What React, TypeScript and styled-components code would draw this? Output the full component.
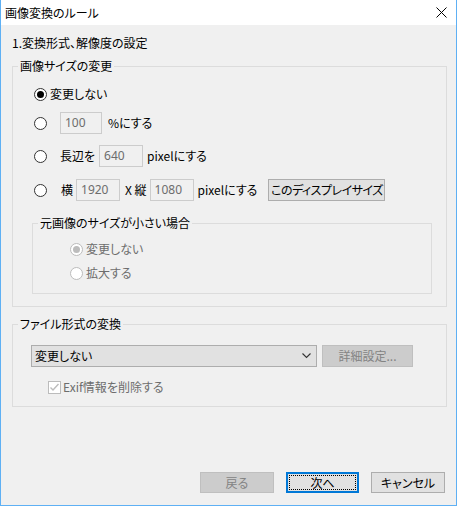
import React from "react";
import styled, { createGlobalStyle, css } from "styled-components";

const GlobalStyle = createGlobalStyle`
  html, body { margin: 0; padding: 0; background: #ffffff; }
  body {
    font-family: "Noto Sans CJK JP", "Noto Sans", sans-serif;
    font-size: 12px;
    line-height: 16px;
    color: #000;
    font-feature-settings: "palt";
  }
  * { box-sizing: border-box; }
`;

const Window = styled.div`
  width: 457px;
  height: 506px;
  border: 1px solid #5eb0f4;
  border-top: none;
  background: #f0f0f0;
  display: flex;
  flex-direction: column;
`;

const TitleBar = styled.div`
  height: 25px;
  flex: none;
  background: #ffffff;
  display: flex;
  align-items: center;
  justify-content: space-between;
  padding: 0 9px 0 4px;
`;

const TitleText = styled.span`
  font-size: 12px;
  line-height: 16px;
`;

const Body = styled.div`
  flex: 1;
  display: flex;
  flex-direction: column;
  padding: 0 9px 12px 11px;
`;

const Heading = styled.div`
  margin-top: 10px;
  line-height: 16px;
`;

const Group = styled.fieldset<{ $mt: number; $mx?: [number, number]; $pb: number }>`
  margin: ${(p) => p.$mt}px ${(p) => (p.$mx ? p.$mx[1] : 0)}px 0 ${(p) => (p.$mx ? p.$mx[0] : 0)}px;
  padding: 0 0 ${(p) => p.$pb}px 0;
  border: 1px solid #dcdcdc;
  min-inline-size: auto;
  display: flex;
  flex-direction: column;
`;

const Legend = styled.legend`
  margin-left: 5px;
  padding: 0 2px;
  line-height: 16px;
  font-size: 12px;
  color: #000;
`;

const Row = styled.div<{ $mt: number; $pl: number; $h?: number }>`
  display: flex;
  align-items: center;
  height: ${(p) => p.$h ?? 22}px;
  margin-top: ${(p) => p.$mt}px;
  padding-left: ${(p) => p.$pl}px;
  white-space: nowrap;
`;

const RadioCircle = styled.span<{ $checked?: boolean; $disabled?: boolean }>`
  flex: none;
  width: 13px;
  height: 13px;
  border-radius: 50%;
  border: 1px solid ${(p) => (p.$disabled ? "#bcbcbc" : "#333333")};
  background: #ffffff;
  display: inline-flex;
  align-items: center;
  justify-content: center;
  ${(p) =>
    p.$checked &&
    css`
      &::after {
        content: "";
        width: 7px;
        height: 7px;
        border-radius: 50%;
        background: ${p.$disabled ? "#bcbcbc" : "#000000"};
      }
    `}
`;

const RadioSlot = styled.span`
  flex: none;
  width: 26px;
  display: inline-flex;
`;

const Label = styled.span<{ $ml?: number; $disabled?: boolean }>`
  margin-left: ${(p) => p.$ml ?? 0}px;
  color: ${(p) => (p.$disabled ? "#6d6d6d" : "#000")};
  line-height: 16px;
`;

const NumBox = styled.span<{ $w: number; $ml?: number }>`
  flex: none;
  width: ${(p) => p.$w}px;
  height: 22px;
  margin-left: ${(p) => p.$ml ?? 0}px;
  border: 1px solid #cccccc;
  background: #f0f0f0;
  color: #6d6d6d;
  padding-left: 4px;
  display: inline-flex;
  align-items: center;
  font-family: "Noto Sans", "Noto Sans CJK JP", sans-serif;
  font-size: 12px;
`;

const Button = styled.span<{ $w: number; $h?: number; $ml?: number; $disabled?: boolean; $default?: boolean; $tight?: boolean }>`
  flex: none;
  width: ${(p) => p.$w}px;
  height: ${(p) => p.$h ?? 21}px;
  margin-left: ${(p) => p.$ml ?? 0}px;
  display: inline-flex;
  align-items: center;
  justify-content: center;
  background: ${(p) => (p.$disabled ? "#cccccc" : "#e1e1e1")};
  border: ${(p) => (p.$default ? "2px solid #0078d7" : p.$disabled ? "1px solid #bfbfbf" : "1px solid #adadad")};
  color: ${(p) => (p.$disabled ? "#838383" : "#000")};
  font-size: 12px;
  line-height: 16px;
  letter-spacing: ${(p) => (p.$tight ? "-0.5px" : "0")};
  position: relative;
`;

const FocusRing = styled.span`
  position: absolute;
  inset: 1px;
  border: 1px dotted #000;
`;

const Select = styled.div`
  flex: none;
  width: 286px;
  height: 22px;
  border: 1px solid #adadad;
  background: #e1e1e1;
  display: flex;
  align-items: center;
  justify-content: space-between;
  padding: 0 5px 0 3px;
`;

const CheckBox = styled.span`
  flex: none;
  width: 13px;
  height: 13px;
  border: 1px solid #bcbcbc;
  background: #ffffff;
  display: inline-flex;
  align-items: center;
  justify-content: center;
`;

const Footer = styled.div`
  margin-top: auto;
  display: flex;
  justify-content: flex-end;
  gap: 12px;
  padding-right: 2px;
`;

const CloseIcon = () => (
  <svg width="11" height="11" viewBox="0 0 11 11">
    <path d="M0.5 0.5 L10.5 10.5 M10.5 0.5 L0.5 10.5" stroke="#000" strokeWidth="1" fill="none" />
  </svg>
);

const Chevron = () => (
  <svg width="9" height="6" viewBox="0 0 9 6">
    <path d="M0.5 0.5 L4.5 4.5 L8.5 0.5" stroke="#333" strokeWidth="1.1" fill="none" />
  </svg>
);

const Check = () => (
  <svg width="11" height="11" viewBox="0 0 11 11">
    <path d="M1.5 5.5 L4 8 L9.5 2" stroke="#bcbcbc" strokeWidth="1.4" fill="none" />
  </svg>
);

export default function App() {
  return (
    <>
      <GlobalStyle />
      <Window>
        <TitleBar>
          <TitleText>画像変換のルール</TitleText>
          <CloseIcon />
        </TitleBar>
        <Body>
          <Heading>1.変換形式、解像度の設定</Heading>
          <Group $mt={7} $pb={12}>
            <Legend>画像サイズの変更</Legend>
            <Row $mt={9} $pl={21}>
              <RadioCircle $checked />
              <Label $ml={3}>変更しない</Label>
            </Row>
            <Row $mt={7} $pl={21}>
              <RadioSlot>
                <RadioCircle />
              </RadioSlot>
              <NumBox $w={42}>100</NumBox>
              <Label $ml={6}>%にする</Label>
            </Row>
            <Row $mt={11} $pl={21}>
              <RadioSlot>
                <RadioCircle />
              </RadioSlot>
              <Label>長辺を</Label>
              <NumBox $w={44} $ml={4}>640</NumBox>
              <Label $ml={4}>pixelにする</Label>
            </Row>
            <Row $mt={12} $pl={21}>
              <RadioSlot>
                <RadioCircle />
              </RadioSlot>
              <Label $ml={1}>横</Label>
              <NumBox $w={44} $ml={3}>1920</NumBox>
              <Label $ml={5}>X 縦</Label>
              <NumBox $w={44} $ml={3}>1080</NumBox>
              <Label $ml={4}>pixelにする</Label>
              <Button $w={117} $h={22} $ml={11} $tight>このディスプレイサイズ</Button>
            </Row>
            <Group $mt={14} $mx={[19, 14]} $pb={12}>
              <Legend>元画像のサイズが小さい場合</Legend>
              <Row $mt={10} $pl={37} $h={16}>
                <RadioCircle $checked $disabled />
                <Label $ml={3} $disabled>変更しない</Label>
              </Row>
              <Row $mt={8} $pl={37} $h={16}>
                <RadioCircle $disabled />
                <Label $ml={3} $disabled>拡大する</Label>
              </Row>
            </Group>
          </Group>
          <Group $mt={9} $pb={11}>
            <Legend>ファイル形式の変換</Legend>
            <Row $mt={13} $pl={18}>
              <Select>
                <span>変更しない</span>
                <Chevron />
              </Select>
              <Button $w={91} $h={22} $ml={5} $disabled>詳細設定...</Button>
            </Row>
            <Row $mt={12} $pl={35} $h={16}>
              <CheckBox>
                <Check />
              </CheckBox>
              <Label $ml={2} $disabled>Exif情報を削除する</Label>
            </Row>
          </Group>
          <Footer>
            <Button $w={74} $disabled>戻る</Button>
            <Button $w={73} $default>
              <FocusRing />
              次へ
            </Button>
            <Button $w={74}>キャンセル</Button>
          </Footer>
        </Body>
      </Window>
    </>
  );
}
